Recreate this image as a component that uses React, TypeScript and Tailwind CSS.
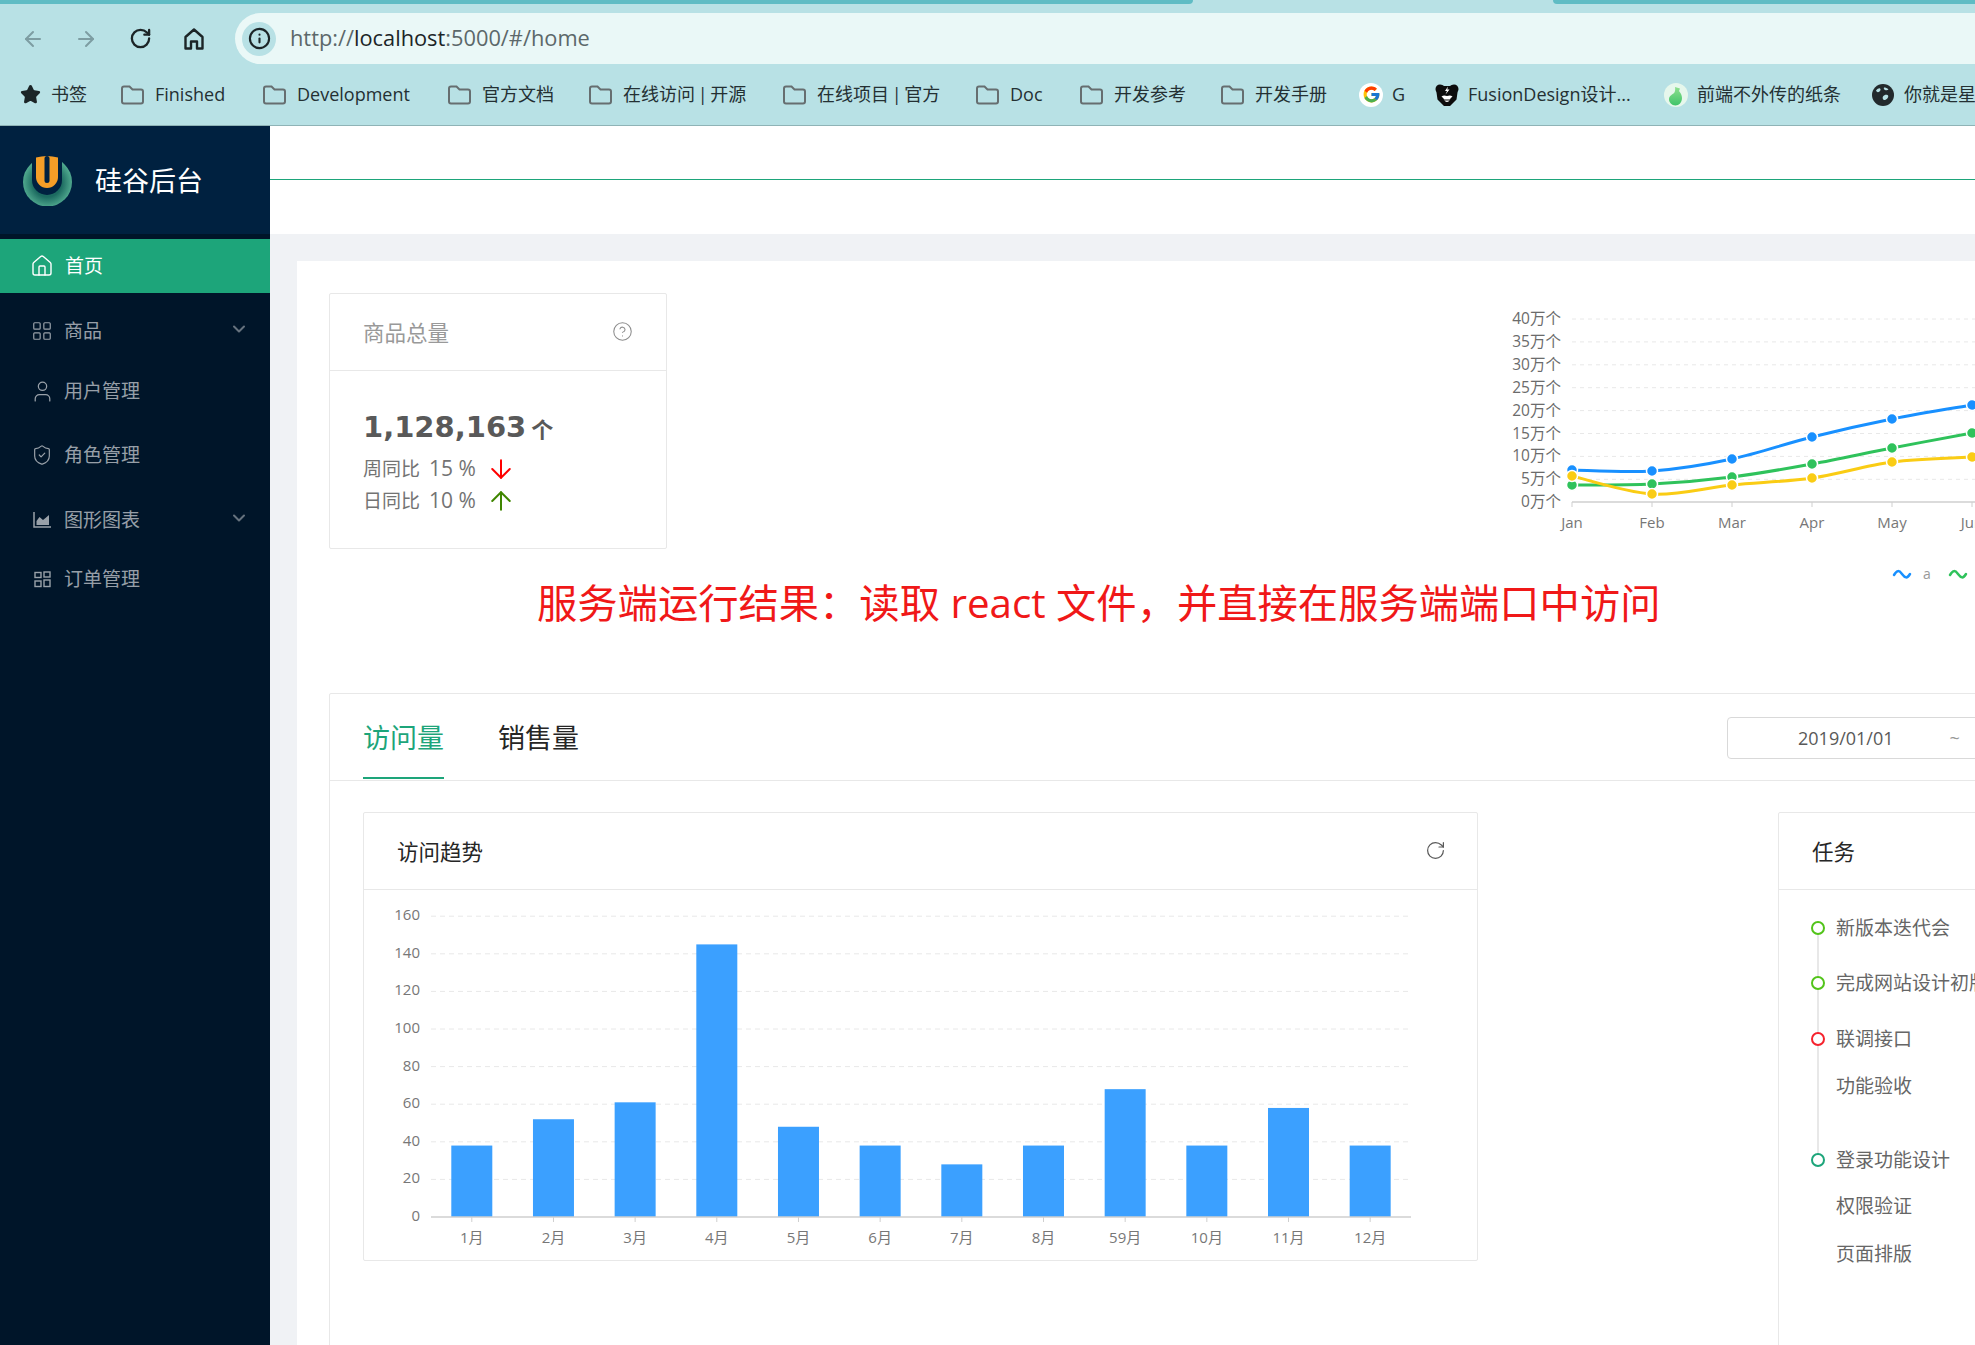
import React from 'react';
import {
  ArrowDown,
  ArrowLeft,
  ArrowRight,
  ArrowUp,
  ChevronDown,
  CircleHelp,
  House,
  Info,
  LayoutGrid,
  RotateCw,
  ShieldCheck,
  Star,
  User,
} from 'lucide-react';
import { FcGoogle } from 'react-icons/fc';

const SANS = "font-['Open_Sans','Noto_Sans_CJK_SC',sans-serif]";

function FolderIcon() {
  return (
    <svg width="25" height="20" viewBox="0 0 25 20" fill="none" className="shrink-0">
      <path d="M2 3.500C2 2.400 2.900 1.500 4 1.500h5.500l3 3H21c1.100 0 2 .9 2 2V16.500c0 1.100-.9 2-2 2H4c-1.100 0-2-.9-2-2z" stroke="#666e70" strokeWidth="2" />
    </svg>
  );
}

function FusionIcon() {
  return (
    <svg width="24" height="24" viewBox="0 0 24 24">
      <path d="M5 1.500c2 0 3 1 4 1.500h6c1-.5 2-1.500 4-1.500 2.500 0 4.500 2 4.500 4.500 0 1.500-.8 2.500-1 3.500l-1 7L15 23H9l-6.500-6.500-1-7c-.2-1-1-2-1-3.500C.5 3.500 2.500 1.500 5 1.500z" fill="#0c0c0c" />
      <path d="M13 3.500l-3 4.500h2l-1.500 3.500 4-5h-2.200z" fill="#fff" />
      <path d="M6.500 13.500c2-1.500 3.500-1 5.500-.5 2-.5 3.500-1 5.500.5-1 1-2 1.500-2.500 3-.6 1.500-1.500 2.500-3 2.500s-2.400-1-3-2.500c-.5-1.500-1.500-2-2.500-3z" fill="#fff" />
      <path d="M9 16.500h6v1H9z" fill="#0c0c0c" />
    </svg>
  );
}

function VaseIcon() {
  return (
    <svg width="24" height="24" viewBox="0 0 24 24">
      <defs>
        <linearGradient id="vase" x1="0" y1="0" x2="0" y2="1">
          <stop offset="0%" stopColor="#8fe08f" />
          <stop offset="100%" stopColor="#3fc46a" />
        </linearGradient>
      </defs>
      <circle cx="12" cy="12" r="12" fill="#e6f7ec" />
      <path d="M11 4l5 1.500-1 2.500c1.500 1.800 3 4 3 7 0 4.500-3 7.500-6.500 7.500-3.800 0-6.500-3-6.500-6.200 0-3 2.500-4.300 4.500-5.800 1.500-1.200 2-3.500 1.500-6.500z" fill="url(#vase)" />
    </svg>
  );
}

function GlobeIcon() {
  return (
    <svg width="22" height="22" viewBox="0 0 22 22">
      <circle cx="11" cy="11" r="11" fill="#22292c" />
      <path d="M4 6.500c1.500-1.500 3-2.500 4-2 1 .7.500 2-.5 3-1.200 1-2.500 1.200-3.500-1zM11 12.500c1-1.500 3-2.200 4.500-1.500 1 .5 1 2 0 3.200-1.200 1.300-3 2.300-4 1.500-.8-.7-1.200-1.900-.5-3.200zM12 3.500c1.500 0 3.200.6 4.500 2-1 1-2.500.9-3.500.5-1-.5-1.500-1.500-1-2.500z" fill="#b8e1e5" />
    </svg>
  );
}

function ChromeHomeIcon() {
  return (
    <svg width="22" height="24" viewBox="0 0 22 24" fill="none">
      <path d="M2.500 21.500V10L11 2.500 19.500 10v11.500h-5.500v-7H8v7z" stroke="#1c2527" strokeWidth="2.400" strokeLinejoin="round" />
    </svg>
  );
}

function OrderIcon() {
  return (
    <svg width="17" height="17" viewBox="0 0 17 17" fill="none" stroke="currentColor" strokeWidth="1.400" className="shrink-0">
      <rect x="1" y="1.500" width="6" height="5" />
      <rect x="10" y="1" width="6" height="5" />
      <rect x="1" y="10" width="6" height="5.500" />
      <rect x="10" y="9" width="6" height="6.500" />
    </svg>
  );
}

function AreaIcon() {
  return (
    <svg width="18" height="16" viewBox="0 0 18 16" className="shrink-0">
      <path d="M1 0v15h17" fill="none" stroke="currentColor" strokeWidth="1.500" />
      <path d="M3.500 13V9l3-4 3.500 3 2.500-2 3.500-3v10z" fill="currentColor" />
    </svg>
  );
}

function Logo() {
  return (
    <svg width="49" height="51" viewBox="0 0 49 51" className="shrink-0">
      <defs>
        <radialGradient id="ring" cx="50%" cy="52%" r="52%">
          <stop offset="55%" stopColor="#1c6a60" />
          <stop offset="100%" stopColor="#54ae92" />
        </radialGradient>
      </defs>
      <circle cx="24.500" cy="27" r="24.500" fill="url(#ring)" />
      <path d="M9 0h30v25a15 15 0 0 1-30 0z" fill="#002140" />
      <path d="M13 2.500Q24 -.5 35 2.500v19.500a11 11 0 0 1-22 0z" fill="#f59e27" />
      <rect x="21.500" y="1" width="5" height="27" rx="2.500" fill="#002140" />
    </svg>
  );
}

const bookmarks = [
  { label: 'Finished', width: 'w-[142px]' },
  { label: 'Development', width: 'w-[185px]' },
  { label: '官方文档', width: 'w-[141px]' },
  { label: '在线访问 | 开源', width: 'w-[194px]' },
  { label: '在线项目 | 官方', width: 'w-[193px]' },
  { label: 'Doc', width: 'w-[104px]' },
  { label: '开发参考', width: 'w-[141px]' },
  { label: '开发手册', width: 'w-[139px]' },
];

function BrowserChrome() {
  return (
    <div className={`${SANS} h-[126px] shrink-0 bg-[#b8e1e5] border-b border-[#8fb3b6]`}>
      <div className="flex h-[4px] justify-between">
        <div className="w-[1193px] bg-[#5fbcc4] rounded-br-[6px]" />
        <div className="w-[422px] bg-[#5fbcc4] rounded-bl-[6px]" />
      </div>
      <div className="flex h-[51px] mt-[9px] items-center">
        <div className="flex w-[235px] items-center pl-[21px] shrink-0">
          <ArrowLeft size={24} color="#7d9da2" strokeWidth={2} />
          <ArrowRight size={24} color="#7d9da2" strokeWidth={2} className="ml-[29px]" />
          <RotateCw size={23} color="#1c2527" strokeWidth={2.4} className="ml-[31px]" />
          <div className="ml-[31px]">
            <ChromeHomeIcon />
          </div>
        </div>
        <div className="flex flex-1 h-full items-center rounded-l-[26px] bg-[#eaf8f7] pl-[7px]">
          <div className="flex h-[34px] w-[34px] items-center justify-center rounded-full bg-[#b8e1e5]">
            <Info size={23} color="#1c2527" strokeWidth={2.2} />
          </div>
          <div className="ml-[14px] -mt-[1px] text-[21.8px] text-[#5c686a]">
            http://<span className="text-[#1c2527]">localhost</span>:5000/#/home
          </div>
        </div>
      </div>
      <div className="flex h-[60px] items-center pl-[20px] pt-[1px] text-[18px] text-[#243033] whitespace-nowrap [word-spacing:-2px]">
        <div className="flex w-[100px] shrink-0 items-center gap-[10px]">
          <Star size={21} fill="#1c2527" color="#1c2527" />
          <span>书签</span>
        </div>
        {bookmarks.map((b) => (
          <div key={b.label} className={`flex ${b.width} shrink-0 items-center gap-[10px]`}>
            <FolderIcon />
            <span>{b.label}</span>
          </div>
        ))}
        <div className="flex w-[76px] shrink-0 items-center gap-[9px]">
          <div className="flex h-[24px] w-[24px] items-center justify-center rounded-full bg-white">
            <FcGoogle size={19} />
          </div>
          <span>G</span>
        </div>
        <div className="flex w-[229px] shrink-0 items-center gap-[9px]">
          <FusionIcon />
          <span>FusionDesign设计...</span>
        </div>
        <div className="flex w-[208px] shrink-0 items-center gap-[9px]">
          <VaseIcon />
          <span>前端不外传的纸条</span>
        </div>
        <div className="flex shrink-0 items-center gap-[10px]">
          <GlobeIcon />
          <span>你就是星</span>
        </div>
      </div>
    </div>
  );
}

const menu = [
  { label: '商品', icon: <LayoutGrid size={22} strokeWidth={1.3} className="shrink-0" />, height: 'h-[60px]', arrow: true },
  { label: '用户管理', icon: <User size={25} strokeWidth={1.2} className="shrink-0" />, height: 'h-[60px]', arrow: false },
  { label: '角色管理', icon: <ShieldCheck size={22} strokeWidth={1.3} className="shrink-0" />, height: 'h-[68px]', arrow: false },
  { label: '图形图表', icon: <AreaIcon />, height: 'h-[62px]', arrow: true },
  { label: '订单管理', icon: <OrderIcon />, height: 'h-[56px]', arrow: false },
];

function Sidebar() {
  return (
    <aside className={`${SANS} w-[270px] shrink-0 bg-[#001529]`}>
      <div className="flex h-[108px] items-center bg-[#002140] pl-[23px]">
        <Logo />
        <span className="ml-[23px] pt-[3px] text-[27px] text-white">硅谷后台</span>
      </div>
      <div className="mt-[5px] flex h-[54px] items-center gap-[11px] bg-[#1da57a] pl-[30px] text-[19px] text-white">
        <House size={24} strokeWidth={1.4} className="shrink-0" />
        <span>首页</span>
      </div>
      <div className="mt-[8px]">
        {menu.map((m) => (
          <div key={m.label} className={`flex ${m.height} items-center pl-[33px] pr-[21px] text-[19px] text-white/60`}>
            <div className="flex w-[18px] justify-center">{m.icon}</div>
            <span className="ml-[13px]">{m.label}</span>
            {m.arrow && <ChevronDown size={20} strokeWidth={2.4} className="ml-auto -mt-[4px] text-white/40" />}
          </div>
        ))}
      </div>
    </aside>
  );
}

function smoothPath(pts: number[][]) {
  let d = `M${pts[0][0]} ${pts[0][1]}`;
  for (let i = 0; i < pts.length - 1; i++) {
    const p0 = pts[Math.max(i - 1, 0)];
    const p1 = pts[i];
    const p2 = pts[i + 1];
    const p3 = pts[Math.min(i + 2, pts.length - 1)];
    const c1 = [p1[0] + (p2[0] - p0[0]) / 6, p1[1] + (p2[1] - p0[1]) / 6];
    const c2 = [p2[0] - (p3[0] - p1[0]) / 6, p2[1] - (p3[1] - p1[1]) / 6];
    d += ` C${c1[0]} ${c1[1]} ${c2[0]} ${c2[1]} ${p2[0]} ${p2[1]}`;
  }
  return d;
}

const months = ['Jan', 'Feb', 'Mar', 'Apr', 'May', 'Jun'];
const monthX = [1572, 1652, 1732, 1812, 1892, 1972];
const lines = [
  { color: '#1890ff', ys: [470, 471, 459, 437, 419, 405] },
  { color: '#2fc25b', ys: [485, 484, 477, 464, 448, 433] },
  { color: '#facc14', ys: [476, 494, 485, 478, 462, 457] },
];

function LineChart() {
  const ticks = [40, 35, 30, 25, 20, 15, 10, 5, 0];
  return (
    <svg width="475" height="300" viewBox="1500 293 475 300" className="shrink-0" fontFamily="'Open Sans','Noto Sans CJK SC',sans-serif">
      {ticks.map((t, i) => {
        const y = 319 + i * 22.9;
        return (
          <g key={t}>
            {t > 0 && <line x1="1572" x2="1975" y1={y} y2={y} stroke="#e8e8e8" strokeDasharray="4 4" />}
            <text x="1561" y={y + 5} textAnchor="end" fontSize="15.500" fill="#6b6b6b">
              {t}万个
            </text>
          </g>
        );
      })}
      <line x1="1572" x2="1975" y1="502" y2="502" stroke="#cfcfcf" strokeWidth="1.500" />
      {months.map((m, i) => (
        <g key={m}>
          <line x1={monthX[i]} x2={monthX[i]} y1="502" y2="507" stroke="#cfcfcf" />
          <text x={monthX[i]} y="528" textAnchor="middle" fontSize="15" fill="#777">
            {m}
          </text>
        </g>
      ))}
      {lines.map((l) => (
        <g key={l.color}>
          <path d={smoothPath(l.ys.map((y, i) => [monthX[i], y]))} fill="none" stroke={l.color} strokeWidth="3" />
          {l.ys.map((y, i) => (
            <circle key={i} cx={monthX[i]} cy={y} r="5.500" fill={l.color} stroke="#fff" strokeWidth="1.500" />
          ))}
        </g>
      ))}
      <path d="M1894 575c3-5 5-5 8-1s5 5 8 0" fill="none" stroke="#1890ff" strokeWidth="2.500" strokeLinecap="round" />
      <text x="1927" y="579" textAnchor="middle" fontSize="14" fill="#999">
        a
      </text>
      <path d="M1950 575c3-5 5-5 8-1s5 5 8 0" fill="none" stroke="#2fc25b" strokeWidth="2.500" strokeLinecap="round" />
    </svg>
  );
}

const bars = [
  { label: '1月', value: 38 },
  { label: '2月', value: 52 },
  { label: '3月', value: 61 },
  { label: '4月', value: 145 },
  { label: '5月', value: 48 },
  { label: '6月', value: 38 },
  { label: '7月', value: 28 },
  { label: '8月', value: 38 },
  { label: '59月', value: 68 },
  { label: '10月', value: 38 },
  { label: '11月', value: 58 },
  { label: '12月', value: 38 },
];

function BarChart() {
  const zero = 1217;
  const unit = 37.6 / 20;
  return (
    <svg width="1113" height="370" viewBox="364 890 1113 370" fontFamily="'Open Sans','Noto Sans CJK SC',sans-serif">
      {[160, 140, 120, 100, 80, 60, 40, 20, 0].map((t) => {
        const y = zero - t * unit;
        return (
          <g key={t}>
            {t > 0 && <line x1="431" x2="1411" y1={y} y2={y} stroke="#e8e8e8" strokeDasharray="5 4" />}
            <text x="420" y={y + 4} textAnchor="end" fontSize="15" fill="#777">
              {t}
            </text>
          </g>
        );
      })}
      {bars.map((b, i) => {
        const cx = 471.8 + i * 81.67;
        const h = b.value * unit;
        return (
          <g key={b.label}>
            <rect x={cx - 20.500} y={zero - h} width="41" height={h} fill="#3ba0ff" />
            <line x1={cx} x2={cx} y1={zero} y2={zero + 5} stroke="#cfcfcf" />
            <text x={cx} y="1243" textAnchor="middle" fontSize="15" fill="#777">
              {b.label}
            </text>
          </g>
        );
      })}
      <line x1="431" x2="1411" y1={zero} y2={zero} stroke="#cfcfcf" strokeWidth="1.500" />
    </svg>
  );
}

const tasks = [
  { label: '新版本迭代会', dot: 'border-[#52c41a] bg-white', gap: 'mt-0' },
  { label: '完成网站设计初版', dot: 'border-[#52c41a] bg-white', gap: 'mt-[27px]' },
  { label: '联调接口', dot: 'border-[#f5222d] bg-white', gap: 'mt-[28px]' },
  { label: '功能验收', dot: 'border-transparent', gap: 'mt-[19px]' },
  { label: '登录功能设计', dot: 'border-[#1da57a] bg-white', gap: 'mt-[46px]' },
  { label: '权限验证', dot: 'border-transparent', gap: 'mt-[18px]' },
  { label: '页面排版', dot: 'border-transparent', gap: 'mt-[20px]' },
];

function TaskCard() {
  return (
    <div className="ml-[300px] w-[400px] h-[600px] shrink-0 rounded-[2px] border border-[#e8e8e8]">
      <div className="flex h-[77px] items-center border-b border-[#e8e8e8] pl-[33px] pt-[3px] text-[21.500px] text-[#262626]">任务</div>
      <div className="relative pl-[32px] pt-[24px] text-[19px] text-[#666]">
        <div className="absolute left-[38px] top-[38px] h-[232px] w-[2px] bg-[#e8e8e8]" />
        {tasks.map((t) => (
          <div key={t.label} className={`${t.gap} flex h-[28px] items-center gap-[11px]`}>
            <div className={`relative h-[14px] w-[14px] rounded-full border-2 ${t.dot}`} />
            <span className="whitespace-nowrap">{t.label}</span>
          </div>
        ))}
      </div>
    </div>
  );
}

export default function App() {
  return (
    <div className="flex h-[1345px] w-[1975px] flex-col overflow-hidden bg-white">
      <BrowserChrome />
      <div className={`${SANS} flex flex-1 overflow-hidden`}>
        <Sidebar />
        <main className="flex flex-1 flex-col overflow-hidden bg-[#f0f2f5]">
          <div className="h-[108px] shrink-0 bg-white">
            <div className="h-[54px] border-b border-[#1da57a]" />
          </div>
          <div className="ml-[27px] mt-[27px] flex-1 bg-white pl-[32px] pt-[32px]">
            <div className="flex h-[256px] w-[1646px] items-start justify-between">
              <div className="h-[256px] w-[338px] rounded-[2px] border border-[#e8e8e8]">
                <div className="flex h-[77px] items-center justify-between border-b border-[#e8e8e8] pl-[33px] pr-[33px] pt-[3px]">
                  <span className="text-[21.500px] text-[#999]">商品总量</span>
                  <CircleHelp size={21} color="#8c8c8c" strokeWidth={1.2} className="-mt-[5px]" />
                </div>
                <div className="pl-[33px] pt-[35px]">
                  <div className="flex h-[44px] items-center">
                    <span className="font-['DejaVu_Sans',sans-serif] text-[29px] font-bold text-[#595959]">1,128,163</span>
                    <span className="ml-[5px] mt-[3px] text-[22px] font-bold text-[#595959]">个</span>
                  </div>
                  <div className="mt-[3px] flex h-[32px] items-center text-[19px] text-[#737373]">
                    <span className="w-[123px] whitespace-nowrap">
                      周同比 <span className="ml-[4px] text-[21px]">15 %</span>
                    </span>
                    <ArrowDown size={30} color="#ff0000" strokeWidth={1.6} className="shrink-0" />
                  </div>
                  <div className="flex h-[32px] items-center text-[19px] text-[#737373]">
                    <span className="w-[123px] whitespace-nowrap">
                      日同比 <span className="ml-[4px] text-[21px]">10 %</span>
                    </span>
                    <ArrowUp size={30} color="#3f8600" strokeWidth={1.6} className="shrink-0" />
                  </div>
                </div>
              </div>
              <LineChart />
            </div>

            <div className="ml-[208px] mt-[26px] h-[56px] whitespace-nowrap text-[40.300px] leading-[56px] text-[#f01818]">
              服务端运行结果：读取 react 文件，并直接在服务端端口中访问
            </div>

            <div className="mt-[62px] w-[1700px] rounded-[2px] border border-[#e8e8e8]">
              <div className="flex h-[87px] items-start justify-between border-b border-[#e8e8e8] px-[33px]">
                <div className="flex gap-[54px] text-[27px]">
                  <div className="flex h-[85px] items-center border-b-2 border-[#1da57a] pt-[6px] text-[#1da57a]">访问量</div>
                  <div className="flex h-[85px] items-center border-b-2 border-transparent pt-[6px] text-[#262626]">销售量</div>
                </div>
                <div className="mt-[23px] flex h-[42px] w-[268px] items-center rounded-[4px] border border-[#d9d9d9] pl-[70px] text-[18px] text-[#595959]">
                  <span>2019/01/01</span>
                  <span className="ml-[56px] text-[#999]">~</span>
                </div>
              </div>
              <div className="flex px-[33px] pt-[31px]">
                <div className="h-[449px] w-[1115px] shrink-0 rounded-[2px] border border-[#e8e8e8]">
                  <div className="flex h-[77px] items-center justify-between border-b border-[#e8e8e8] pl-[33px] pr-[31px] pt-[2px]">
                    <span className="text-[21.500px] text-[#262626]">访问趋势</span>
                    <RotateCw size={21} color="#595959" strokeWidth={1.4} className="-mt-[4px]" />
                  </div>
                  <BarChart />
                </div>
                <TaskCard />
              </div>
            </div>
          </div>
        </main>
      </div>
    </div>
  );
}
